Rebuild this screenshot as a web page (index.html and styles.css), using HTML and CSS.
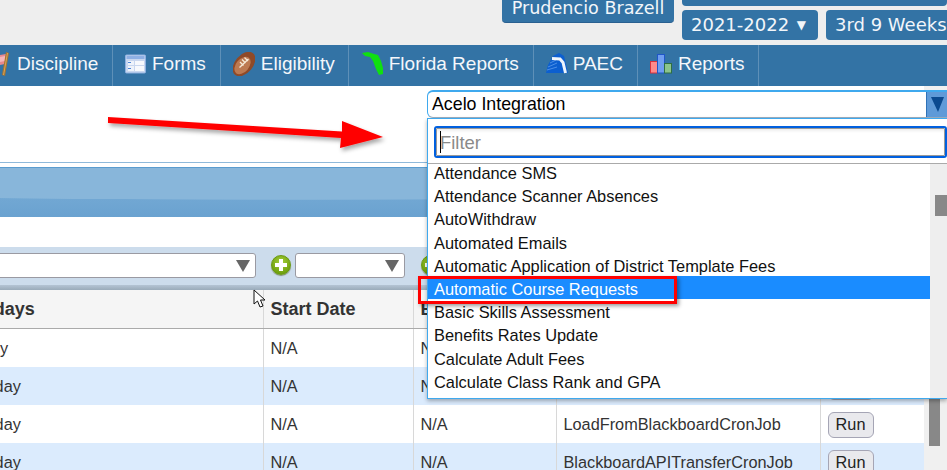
FILE: index.html
```html
<!DOCTYPE html>
<html lang="en">
<head>
<meta charset="utf-8">
<title>Scheduled Jobs</title>
<link rel="stylesheet" href="styles.css">
</head>
<body>
<header class="top">
  <div class="user">Prudencio Brazell</div>
  <div class="term">
    <div class="term-bar"></div>
    <div class="term-row">
      <div class="pill pill-year">2021-2022 <span class="pill-caret">▼</span></div>
      <div class="pill pill-weeks">3rd 9 Weeks</div>
    </div>
  </div>
</header>
<nav class="nav">
  <a class="nav-item nav-first"><svg width="9" height="24" viewBox="0 0 9 24"><path d="M0 3 6 2 5 12 0 13Z" fill="#e8898f"/><path d="M0 5 5 4 5 9 0 10Z" fill="#f4b6bb"/><path d="M6 0 9 1 5 24 2 23Z" fill="#a8742f"/><path d="M7 1 8 1 4 23 3 23Z" fill="#d4a45c"/></svg><span>Discipline</span></a>
  <a class="nav-item nav-forms"><svg width="21" height="20" viewBox="0 0 21 20"><rect x=".5" y="1" width="20" height="18" rx="1" fill="#c9d7ef" stroke="#8fb0e0"/><rect x="1.500" y="2" width="18" height="3" fill="#8fb0e4"/><rect x="3" y="7" width="6" height="4" fill="#eef3fb"/><rect x="10" y="7" width="9" height="4" fill="#f7f9fd"/><rect x="3" y="12" width="6" height="5" fill="#eef3fb"/><rect x="10" y="12" width="9" height="5" fill="#f7f9fd"/><rect x="3" y="8" width="3" height="1" fill="#4f86d8"/><rect x="3" y="14" width="3" height="1" fill="#4f86d8"/></svg><span>Forms</span></a>
  <a class="nav-item"><svg width="22" height="24" viewBox="0 0 22 24"><ellipse cx="11" cy="12" rx="9" ry="14" transform="rotate(40 11 12)" fill="#8f4a28"/><ellipse cx="9.500" cy="13.500" rx="6.500" ry="10" transform="rotate(40 9.500 13.500)" fill="#bd7a52"/><path d="M6.500 15.500 15.500 7M9 7.500l3.500 3.500M11.500 5.500l3.500 3.500M7 10l3.500 3.500" stroke="#f6ead8" stroke-width="1.300" fill="none"/></svg><span>Eligibility</span></a>
  <a class="nav-item nav-fl"><svg width="21" height="23" viewBox="0 0 21 23"><path d="M0 1 6 0 12 2 16 3 19 9 21 16 21 22 17 23 14 17 11 9 8 5 3 4Z" fill="#10e010"/></svg><span>Florida Reports</span></a>
  <a class="nav-item nav-paec"><svg width="22" height="21" viewBox="0 0 22 21"><path d="M0 20 2 12 7 3 13 0 18 3 22 20Z" fill="#0c5fd0"/><path d="M1 17 11 14M2 14 11 10M4 10 10 7" stroke="#5c9bea" stroke-width=".8"/><path d="M6 5.500 14 6 17 9.500 19.500 20" stroke="#f0f5fb" stroke-width="3" fill="none"/></svg><span>PAEC</span></a>
  <a class="nav-item nav-rep"><svg width="22" height="20" viewBox="0 0 22 20"><rect x=".5" y="7.500" width="7" height="11.500" fill="#ff8a8a" stroke="#d8323c"/><rect x="7.500" y=".5" width="7" height="18.500" fill="#6f9ef0" stroke="#1f56c8"/><rect x="14.500" y="9.500" width="7" height="9.500" fill="#8cc48c" stroke="#2f6f42"/></svg><span>Reports</span></a>
</nav>
<div class="body">
  <main class="main">
    <div class="intro"></div>
    <div class="banner"></div>
    <div class="spacer"></div>
    <div class="tools">
      <div class="sel sel-wide"><i class="sel-tri"></i></div>
      <i class="plus"></i>
      <div class="sel sel-small"><i class="sel-tri"></i></div>
      <i class="plus plus-last"></i>
    </div>
    <div class="tools-edge"></div>
    <table class="jobs">
      <colgroup><col class="c1"><col class="c2"><col class="c3"><col class="c4"><col></colgroup>
      <thead>
        <tr><th><span class="cut cut-head">Weekdays</span></th><th>Start Date</th><th>End Date</th><th>Class</th><th></th></tr>
      </thead>
      <tbody>
        <tr class="r1"><td><span class="cut cut-daily">Daily</span></td><td>N/A</td><td>N/A</td><td></td><td></td></tr>
        <tr class="alt"><td><span class="cut cut-every">Everyday</span></td><td>N/A</td><td>N/A</td><td></td><td><button class="run">Run</button></td></tr>
        <tr><td><span class="cut cut-every">Everyday</span></td><td>N/A</td><td>N/A</td><td>LoadFromBlackboardCronJob</td><td><button class="run">Run</button></td></tr>
        <tr class="alt"><td><span class="cut cut-every">Everyday</span></td><td>N/A</td><td>N/A</td><td>BlackboardAPITransferCronJob</td><td><button class="run">Run</button></td></tr>
      </tbody>
    </table>
  </main>
  <aside class="gutter"><div class="gutter-thumb"></div></aside>
</div>

<svg class="arrow" width="300" height="50" viewBox="0 0 300 50"><defs><filter id="sh" x="-5%" y="-30%" width="110%" height="170%"><feDropShadow dx="2" dy="3" stdDeviation="2" flood-color="#000" flood-opacity=".35"/></filter></defs><path d="M8 7 242 21.500 242 11 283 27 240 38 241 28 8 13Z" fill="#f00" filter="url(#sh)"/></svg>

<div class="combo">
  <div class="combo-head"><span class="combo-val">Acelo Integration</span><span class="combo-btn"><i></i></span></div>
  <div class="combo-panel">
    <div class="filter-wrap"><div class="filter"><i class="caret"></i>Filter</div></div>
    <div class="list-wrap">
      <ul class="list">
        <li>Attendance SMS</li>
        <li>Attendance Scanner Absences</li>
        <li>AutoWithdraw</li>
        <li>Automated Emails</li>
        <li>Automatic Application of District Template Fees</li>
        <li class="on">Automatic Course Requests</li>
        <li>Basic Skills Assessment</li>
        <li>Benefits Rates Update</li>
        <li>Calculate Adult Fees</li>
        <li>Calculate Class Rank and GPA</li>
      </ul>
      <div class="list-bar"><div class="list-thumb"></div></div>
    </div>
  </div>
</div>
<div class="redbox"></div>
<svg class="cursor" width="14" height="20" viewBox="0 0 14 20"><path d="M1 1 1 15 4.500 12 7 18 10 17 7.500 11 12 11Z" fill="#fff" stroke="#111" stroke-width="1"/></svg>
</body>
</html>
```
FILE: styles.css
```css
html, body { margin: 0; padding: 0; height: 470px; overflow: hidden; }
body { position: relative; background: #fff; font-family: "Liberation Sans", Arial, sans-serif; font-size: 16px; color: #333; }
* { box-sizing: border-box; }

.top { height: 45px; background: #eee; display: flex; padding-left: 502px; overflow: hidden; }
.user { width: 172px; height: 23px; background: #3373a5; border-bottom: 1px solid #2a6090; border-radius: 0 0 4px 4px; color: #f2f6fa; font: 17.6px/17px "DejaVu Sans", sans-serif; text-align: center; white-space: nowrap; }
.term { margin-left: 8px; flex: 1; min-width: 0; }
.term-bar { height: 6px; background: #3373a5; border-radius: 0 0 4px 4px; }
.term-row { display: flex; gap: 8px; margin-top: 4px; }
.pill { height: 30px; background: #3373a5; border-radius: 4px; color: #f2f6fa; font: 18px/30px "DejaVu Sans", sans-serif; white-space: nowrap; padding-left: 9px; flex: none; }
.pill-year { width: 136px; }
.pill-weeks { width: 140px; }
.pill-caret { font-size: 12px; vertical-align: 2px; margin-left: 2px; }

.nav { height: 41px; background: #3373a5; display: flex; overflow: hidden; }
.nav-item { display: flex; align-items: center; gap: 6px; padding: 0 13px 4px 12px; border-right: 1px solid #5e90b8; color: #f4f7fb; font-size: 19px; white-space: nowrap; height: 41px; }
.nav-item svg { flex: none; }
.nav-first { padding: 0 14px 4px 0; gap: 8px; width: 113px; }
.nav-forms { padding-right: 14px; }
.nav-fl { padding-left: 13px; padding-right: 14px; }
.nav-paec { gap: 5px; padding-right: 14px; }
.nav-rep { padding-right: 13px; }

.body { display: flex; height: 384px; }
.main { width: 924px; flex: none; overflow: hidden; }
.gutter { flex: 1; background: #f0f0f0; }
.gutter-thumb { width: 11px; height: 146px; margin: 214px 0 0 5px; background: #888; }

.intro { height: 77px; border-bottom: 1px solid #8fb9da; }
.banner { height: 50px; margin-top: 4px; border-top: 1px solid #5a9ccf; background: radial-gradient(ellipse 1000px 32px at 300px 0, #88b6da 98%, transparent 100%), linear-gradient(#7eb0d8, #6aa2d0); }
.spacer { height: 30px; }
.tools { height: 38px; background: #ccdcec; display: flex; align-items: center; padding-bottom: 2px; }
.tools-edge { height: 5px; background: linear-gradient(#b4c4d4, #9aabba); }
.sel { height: 25px; background: #fff; border: 1px solid #9a9aa2; border-radius: 3px; position: relative; flex: none; }
.sel-wide { width: 260px; margin-left: -4px; }
.sel-small { width: 110px; }
.sel-tri { position: absolute; right: 5px; top: 6px; width: 0; height: 0; border-left: 7px solid transparent; border-right: 7px solid transparent; border-top: 12px solid #666; }
.plus { width: 20px; height: 20px; border-radius: 50%; flex: none; margin: 0 4px 0 15px; position: relative; border: 1px solid #6a9a10; background: radial-gradient(circle at 50% 35%, #a6d03c, #6fa00e 75%); box-shadow: 0 1px 1px #7d8c70; }
.plus::before { content: ""; position: absolute; left: 3px; top: 7px; width: 12px; height: 4px; background: #fff; }
.plus::after { content: ""; position: absolute; left: 7px; top: 3px; width: 4px; height: 12px; background: #fff; }
.plus-last { margin-left: 16px; }

.jobs { width: 924px; table-layout: fixed; border-collapse: collapse; font-size: 16.3px; }
.c1 { width: 263px; }
.c2 { width: 150px; }
.c3 { width: 143px; }
.c4 { width: 264px; }
.jobs th { height: 38px; background: #f5f5f5; border-bottom: 1px solid #aaa; border-right: 1px solid #d8d8d8; text-align: left; font-size: 18px; padding: 1px 0 0 7px; color: #333; overflow: hidden; white-space: nowrap; }
.jobs td { height: 38px; border-right: 1px solid #d8d8d8; padding: 1px 0 0 7px; overflow: hidden; white-space: nowrap; color: #333; }
.jobs tr > :first-child { padding-left: 0; }
.jobs tr > :last-child { border-right: 0; }
.jobs .r1 td { height: 39px; }
.alt td { background: #dbebfd; }
.cut { display: inline-block; }
.cut-head { margin-left: -53px; }
.cut-daily { margin-left: -28px; }
.cut-every { margin-left: -47px; }
.run { width: 46px; height: 26px; padding: 0; background: #e9e9ed; border: 1px solid #a5a5b5; border-radius: 6px; color: #222; font: 16.3px "Liberation Sans", Arial, sans-serif; display: block; }

.arrow { position: absolute; left: 100px; top: 110px; }
.cursor { position: absolute; left: 253px; top: 289px; }

.combo { position: absolute; left: 427px; top: 90px; width: 520px; color: #111; }
.combo-head { height: 28px; display: flex; justify-content: space-between; background: #fff; border: 1px solid #3fa9ee; border-top-width: 2px; border-bottom: 1px solid #9fb0c0; border-right: 0; border-radius: 6px 0 0 6px; }
.combo-val { padding-left: 4px; font-size: 17.8px; line-height: 25px; color: #000; }
.combo-btn { width: 21px; background: #5f9ad8; border-left: 1px solid #2f72b8; display: flex; align-items: center; justify-content: center; }
.combo-btn i { width: 0; height: 0; border-left: 7px solid transparent; border-right: 6px solid transparent; border-top: 15px solid #0b4a90; }
.combo-panel { height: 281px; background: #fff; border: 1px solid #3fa9ee; border-right: 0; box-shadow: 0 2px 4px rgba(0,0,0,.3); overflow: hidden; }
.filter-wrap { padding: 7px 0 6px 6px; height: 45px; border-bottom: 1px solid #aaa; }
.filter { height: 32px; border: 2px solid #0060df; outline: 1px solid #999; outline-offset: -3px; border-radius: 3px; font-size: 18.4px; line-height: 30px; padding-left: 4px; color: #8a8a8a; position: relative; box-shadow: inset 0 3px 3px #eee; }
.caret { position: absolute; left: 4px; top: 3px; width: 1px; height: 22px; background: #000; }
.list-wrap { display: flex; height: 235px; }
.list { list-style: none; margin: 0; padding: 0; width: 502px; overflow: hidden; flex: none; font-size: 16.4px; }
.list li { height: 23.2px; line-height: 27px; padding-left: 6px; white-space: nowrap; position: relative; top: -4px; }
.list .on { background: #1a8cff; color: #fff; }
.list-bar { flex: 1; background: #eee; }
.list-thumb { width: 12px; height: 21px; margin: 31px 0 0 5px; background: #888; }

.redbox { position: absolute; left: 418px; top: 276px; width: 259px; height: 28px; border: 3px solid #f00; box-shadow: 2px 2px 4px rgba(0,0,0,.4); }
```
